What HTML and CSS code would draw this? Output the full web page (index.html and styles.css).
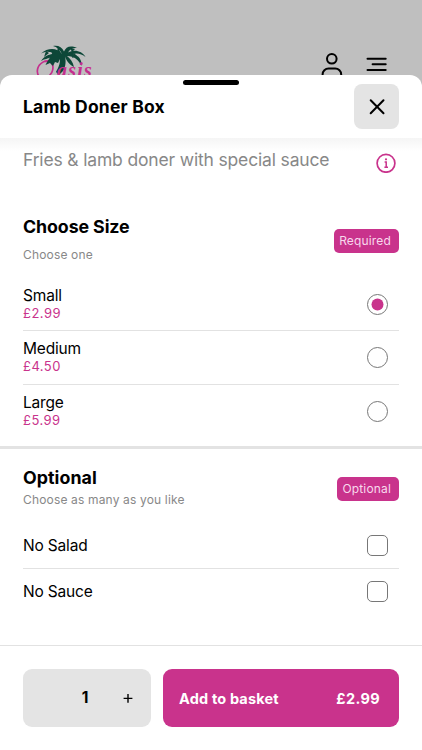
FILE: index.html
```html
<!DOCTYPE html>
<html lang="en">
<head>
<meta charset="utf-8">
<meta name="viewport" content="width=device-width, initial-scale=1">
<title>Lamb Doner Box</title>
<link rel="stylesheet" href="styles.css">
</head>
<body>
<header class="site-bar">
  <div class="logo">
    <svg class="palm" width="52" height="36" viewBox="0 0 52 36" aria-hidden="true">
      <path d="M15 17C10 14 3 18 1.6 24C.2 31 5 35 10 33C15 31 18 25 16.6 20C15.5 16.5 12 15.6 9.6 16.4" fill="none" stroke="#c42f8d" stroke-width="1.7" stroke-linecap="round"/>
      <g fill="#0d4738">
        <path d="M26 9C21 2.5 12 2.5 5 8.5C10 6 15 6.500 19 9C14 8.500 8 11 5 16C9 13.500 12 14 14 12.500L11 17L9.500 20L14 18L17 21L19 17L22 18L24 14C24 20 22 23 20 27L23 30L27 26C30 21 30 16 29 11.500C31 17 34 20 38 22C37 17 34 13.500 31 11C38 11 43 15 45.500 21C46 15 43 10.500 37 9C41 7.500 46 9 49.500 12C46 5.500 38 4 32 7.500C34 4 37 2.500 41 3C34 0 30 2 28 6.500C26 2 22 0 17 1C21 2 24 5 26 9Z"/>
        <path d="M10 6l-2 6 5-4zM15 6l2 5 3-3zM38 8l-2 5 5-2zM34 3l2 4 3-3zM22 2l-1 5 4 2z"/>
      </g>
    </svg>
    <span class="wordmark">asis</span>
  </div>
  <div class="site-actions">
    <svg width="22" height="26" viewBox="0 0 22 26" fill="none" stroke="#000" stroke-width="2" stroke-linecap="round" aria-hidden="true"><circle cx="10.8" cy="5.8" r="4.8"/><path d="M1.6 24V21.500a6 6 0 0 1 6-6h6.600a6 6 0 0 1 6 6V24"/></svg>
    <svg width="22" height="26" viewBox="0 0 22 26" fill="none" stroke="#000" stroke-width="2" stroke-linecap="round" aria-hidden="true"><path d="M1.500 5.700h18.200M6.600 11.300h13.100M1.500 17h18.200"/></svg>
  </div>
</header>

<main class="sheet">
  <div class="handle"></div>
  <div class="sheet-head">
    <h1 class="title">Lamb Doner Box</h1>
    <button class="close" aria-label="Close"><svg width="17" height="17" viewBox="0 0 17 17" fill="none" stroke="#000" stroke-width="2" stroke-linecap="round"><path d="M2.700 2.200l12.800 13M15.500 2.200l-12.800 13"/></svg></button>
  </div>
  <div class="content">
    <div class="about">
      <p class="description">Fries &amp; lamb doner with special sauce</p>
      <svg class="info" width="20" height="20" viewBox="0 0 20 20" fill="none" stroke="#c9338c" aria-hidden="true"><circle cx="10" cy="10.300" r="8.900" stroke-width="1.700"/><path d="M8.600 9H10.200V14M8.400 14.300h3.600" stroke-width="1.500"/><circle cx="10" cy="6.300" r="1.100" fill="#c9338c" stroke="none"/></svg>
    </div>

    <section class="group sizes">
      <div class="group-head">
        <div><h2 class="heading size-heading">Choose Size</h2><p class="hint size-hint">Choose one</p></div>
        <span class="badge">Required</span>
      </div>
      <div class="option"><div><div class="name">Small</div><div class="price">£2.99</div></div><span class="radio"><svg width="21" height="21" viewBox="0 0 21 21" aria-hidden="true"><circle cx="10.500" cy="10.500" r="6" fill="#c9338c"/></svg></span></div>
      <div class="option"><div><div class="name">Medium</div><div class="price">£4.50</div></div><span class="radio"></span></div>
      <div class="option"><div><div class="name">Large</div><div class="price">£5.99</div></div><span class="radio"></span></div>
    </section>

    <section class="group extras">
      <div class="group-head">
        <div><h2 class="heading">Optional</h2><p class="hint">Choose as many as you like</p></div>
        <span class="badge">Optional</span>
      </div>
      <div class="option"><div class="name">No Salad</div><span class="check"></span></div>
      <div class="option"><div class="name">No Sauce</div><span class="check"></span></div>
    </section>
  </div>

  <footer class="order">
    <div class="quantity"><span></span><b>1</b><svg width="10" height="10" viewBox="0 0 10 10" stroke="#000" stroke-width="1.400" aria-hidden="true"><path d="M.6 5.400h8.800M5 1v8.800"/></svg></div>
    <button class="add"><span>Add to basket</span><span class="add-price">£2.99</span></button>
  </footer>
</main>
</body>
</html>
```

FILE: styles.css
```css
* { box-sizing: border-box; }
body {
  margin: 0;
  height: 750px;
  display: flex;
  flex-direction: column;
  overflow: hidden;
  background: #bfbfbf;
  color: #000;
  font-family: Inter, "Liberation Sans", sans-serif;
}
h1, h2, p { margin: 0; }
button { border: 0; padding: 0; font-family: inherit; }
svg { display: block; flex: none; }

.site-bar {
  height: 75px;
  flex: none;
  padding: 45px 34px 0 36px;
  display: flex;
  justify-content: space-between;
}
.logo { position: relative; width: 56px; height: 36px; }
.wordmark {
  position: absolute;
  left: 21px;
  top: 13px;
  color: #c42f8d;
  font: italic bold 20px/24px "Liberation Serif", serif;
  letter-spacing: 1.2px;
}
.palm { position: relative; }
.site-actions { display: flex; gap: 23px; padding-top: 8px; }

.sheet {
  flex: 1;
  display: flex;
  flex-direction: column;
  position: relative;
  background: #fff;
  border-radius: 12px 12px 0 0;
}
.handle {
  position: absolute;
  left: 183px;
  top: 5px;
  width: 56px;
  height: 5px;
  border-radius: 3px;
  background: #000;
}
.sheet-head {
  height: 63px;
  flex: none;
  padding: 0 23px;
  display: flex;
  align-items: center;
  justify-content: space-between;
}
.title { font-size: 17.5px; line-height: 24px; font-weight: 700; letter-spacing: .18px; }
.close {
  width: 45px;
  height: 45px;
  border-radius: 8px;
  background: #e4e4e4;
  display: grid;
  place-items: center;
}
.content {
  flex: 1;
  background: linear-gradient(#f5f5f5, #fff 13px);
}
.about {
  height: 76px;
  padding: 10px 26px 0 23px;
  display: flex;
  justify-content: space-between;
}
.description { color: #888; font-size: 17.5px; line-height: 24px; letter-spacing: -.16px; }
.info { margin-top: 5px; }

.group { padding: 0 23px; }
.group-head { display: flex; justify-content: space-between; }
.heading { font-size: 17.8px; line-height: 24px; font-weight: 700; letter-spacing: -.1px; }
.hint { color: #888; font-size: 12px; line-height: 16px; letter-spacing: .16px; }
.size-heading { margin-top: 1px; }
.size-hint { margin-top: 8px; }
.badge {
  height: 24px;
  padding: 0 8px 0 5px;
  border-radius: 5px;
  background: #c9338c;
  color: #f8d9ec;
  font-size: 12px;
  line-height: 24px;
  letter-spacing: .16px;
}
.option {
  display: flex;
  align-items: center;
  justify-content: space-between;
  padding-right: 11px;
  border-bottom: 1px solid #e2e2e2;
}
.option:last-child { border-bottom: 0; }
.name { font-size: 15.5px; line-height: 18px; letter-spacing: -.18px; }
.price { color: #c9338c; font-size: 13px; line-height: 17px; letter-spacing: .45px; }
.radio, .check { width: 21px; height: 21px; border: 1px solid #777; background: #fff; }
.radio { border-radius: 50%; }
.radio svg { margin: -1px; }
.check { border-radius: 5px; }

.sizes { height: 235px; border-bottom: 3px solid #e3e3e3; }
.sizes .group-head { height: 64px; }
.sizes .badge { margin-top: 15px; }
.sizes .option { height: 53.4px; }
.extras { padding-top: 16px; }
.extras .heading { margin-top: 1px; letter-spacing: .05px; }
.extras .group-head { height: 58px; }
.extras .hint { margin-top: 2px; }
.extras .badge { margin-top: 12px; }
.extras .option { height: 46px; }
.extras .option:last-child { height: 45px; }

.order {
  height: 105px;
  flex: none;
  padding: 23px 23px 0;
  border-top: 1px solid #e2e2e2;
  display: flex;
  gap: 12px;
}
.quantity {
  width: 128px;
  height: 58px;
  border-radius: 9px;
  background: #e4e4e4;
  display: grid;
  grid-template-columns: 40px 44px 42px;
  align-items: center;
  justify-items: center;
}
.quantity b { font-size: 15.5px; font-weight: 700; line-height: 20px; }
.add {
  flex: 1;
  height: 58px;
  padding: 0 19px 0 16px;
  border-radius: 9px;
  background: #c9338c;
  color: #fff;
  display: flex;
  align-items: center;
  justify-content: space-between;
  font-size: 14.5px;
  font-weight: 700;
  letter-spacing: .17px;
}
.add-price { letter-spacing: .35px; }
```
